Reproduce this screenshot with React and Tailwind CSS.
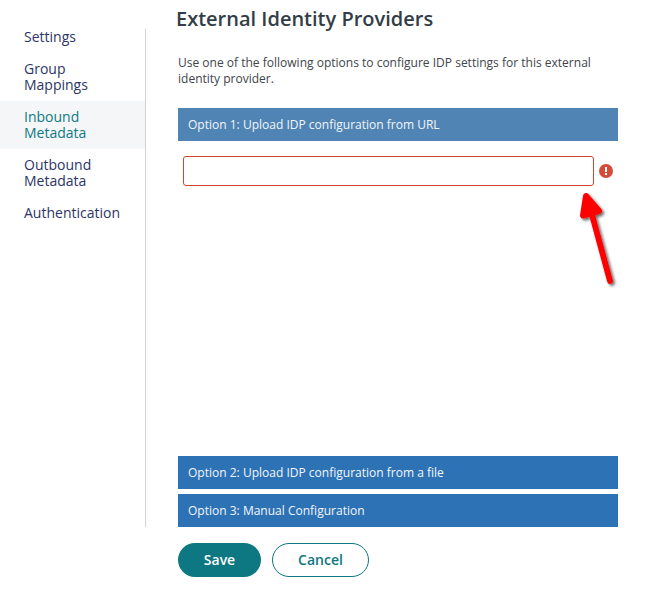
const navItems = [
  { label: "Settings", pad: "pt-0 pb-2" },
  { label: "Group Mappings", pad: "py-2" },
  { label: "Inbound Metadata", pad: "py-2", active: true },
  { label: "Outbound Metadata", pad: "py-2" },
  { label: "Authentication", pad: "py-2" },
];

function Sidebar() {
  return (
    <nav className="mt-[29px] h-[498px] w-[146px] shrink-0 border-r border-[#d0d2d3]">
      <ul>
        {navItems.map((item) => (
          <li
            key={item.label}
            className={`pl-6 pr-4 text-[14px] leading-4 ${item.pad} ${
              item.active ? "bg-[#f4f6f8] text-[#0f7983]" : "text-[#2d3566]"
            }`}
          >
            {item.label}
          </li>
        ))}
      </ul>
    </nav>
  );
}

function OptionBar({ children, open }) {
  return (
    <div
      className={`h-[33px] px-2.5 pt-[9px] text-[12.03px] leading-4 text-[#f2f6fa] ${
        open ? "bg-[#5084b4]" : "bg-[#2d72b5]"
      }`}
    >
      {children}
    </div>
  );
}

function ErrorIcon() {
  return (
    <svg width="14" height="14" viewBox="0 0 14 14" className="shrink-0">
      <circle cx="7" cy="7" r="7" fill="#d64b37" />
      <path d="M6 3h2v5H6zM6 9h2v2H6z" fill="#fff" />
    </svg>
  );
}

function Arrow() {
  return (
    <svg
      width="53"
      height="110"
      viewBox="570 185 53 110"
      className="absolute left-[570px] top-[185px]"
    >
      <defs>
        <filter id="arrow-shadow" x="-30%" y="-30%" width="170%" height="170%">
          <feDropShadow dx="2" dy="2" stdDeviation="1.6" floodColor="#000" floodOpacity="0.6" />
        </filter>
      </defs>
      <g filter="url(#arrow-shadow)" fill="#fe0000" stroke="#fe0000" strokeLinejoin="round" strokeLinecap="round">
        <path d="M591.5 213L610 281" strokeWidth="5.8" />
        <path d="M586 196L599 211L583 215.5Z" strokeWidth="6" />
      </g>
    </svg>
  );
}

export default function App() {
  return (
    <div className="relative flex h-[597px] w-[653px] overflow-hidden bg-white font-['Open_Sans',sans-serif]">
      <Sidebar />
      <main className="ml-8 w-[440px]">
        <h1 className="-ml-0.5 mt-[5px] text-[20px] font-semibold leading-7 text-[#333d47]">
          External Identity Providers
        </h1>
        <p className="mt-[22px] text-[12.02px] leading-4 text-[#40454a]">
          Use one of the following options to configure IDP settings for this external identity provider.
        </p>
        <section className="mt-[21px]">
          <OptionBar open>Option 1: Upload IDP configuration from URL</OptionBar>
          <div className="flex h-[315px] items-start px-[5px] pt-[15px]">
            <div className="flex items-center gap-[5px]">
              <input
                type="text"
                className="h-[30px] w-[411px] rounded-[3px] border border-[#d0432e] bg-white px-2 text-[12px] outline-none"
              />
              <ErrorIcon />
            </div>
          </div>
          <div className="flex flex-col gap-[5px]">
            <OptionBar>Option 2: Upload IDP configuration from a file</OptionBar>
            <OptionBar>Option 3: Manual Configuration</OptionBar>
          </div>
        </section>
        <div className="mt-4 flex gap-[11px] text-[14px] font-semibold">
          <button className="h-[34px] w-[83px] rounded-full bg-[#0d7782] pb-0.5 text-white">Save</button>
          <button className="h-[34px] w-[97px] rounded-full border border-[#0d7782] bg-white pb-0.5 text-[#0d7782]">
            Cancel
          </button>
        </div>
      </main>
      <Arrow />
    </div>
  );
}
